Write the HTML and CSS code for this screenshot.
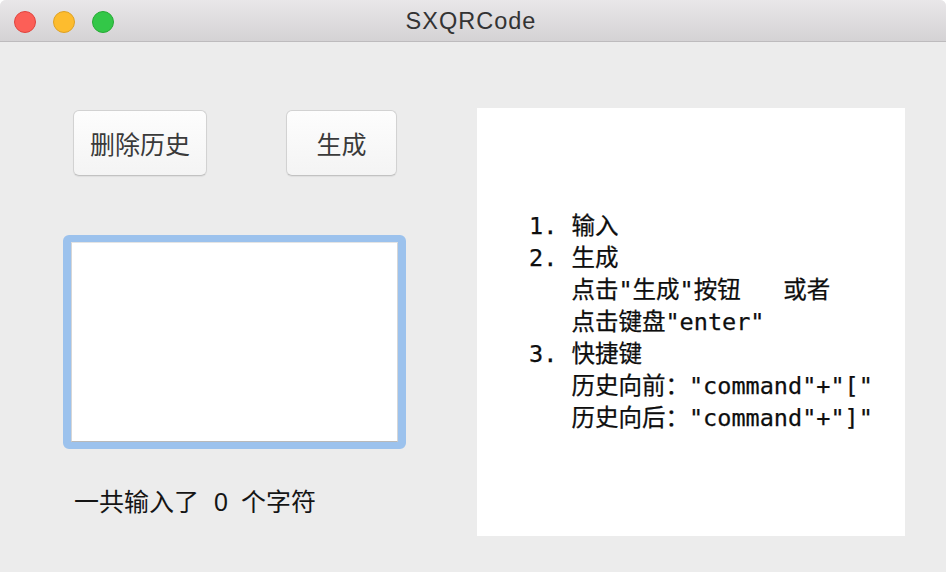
FILE: index.html
```html
<!DOCTYPE html>
<html lang="zh">
<head>
<meta charset="utf-8">
<title>SXQRCode</title>
<link rel="stylesheet" href="styles.css">
</head>
<body>
<div class="window">
  <header class="titlebar">
    <div class="lights">
      <span class="light red"></span>
      <span class="light yellow"></span>
      <span class="light green"></span>
    </div>
    <div class="title">SXQRCode</div>
  </header>
  <main class="content">
    <section class="left">
      <div class="buttons">
        <button class="btn btn-delete">删除历史</button>
        <button class="btn btn-gen">生成</button>
      </div>
      <div class="field"><div class="field-inner"></div></div>
      <div class="count">一共输入了<span class="num">0</span>个字符</div>
    </section>
    <section class="panel">
<pre class="help">1. 输入
2. 生成
   点击"生成"按钮   或者
   点击键盘"enter"
3. 快捷键
   历史向前："command"+"["
   历史向后："command"+"]"</pre>
    </section>
  </main>
</div>
</body>
</html>
```
FILE: styles.css
```css
html, body {
  margin: 0;
  padding: 0;
  background: #ffffff;
}
body {
  width: 946px;
  height: 572px;
  overflow: hidden;
  font-family: "Noto Sans CJK SC", "Liberation Sans", sans-serif;
}
.window {
  width: 946px;
  height: 572px;
  background: #ececec;
  border-radius: 6px 6px 0 0;
  overflow: hidden;
  display: flex;
  flex-direction: column;
}
.titlebar {
  height: 41px;
  border-bottom: 1px solid #bdbbbd;
  background: linear-gradient(#e9e7e9, #d4d2d4);
  display: flex;
  align-items: center;
  position: relative;
  flex-shrink: 0;
}
.lights {
  display: flex;
  gap: 17px;
  padding-left: 14px;
  padding-top: 2px;
}
.light {
  width: 22px;
  height: 22px;
  border-radius: 50%;
  box-sizing: border-box;
}
.red { background: #fc5f57; border: 1px solid #e0443e; }
.yellow { background: #fdbc2e; border: 1px solid #dea123; }
.green { background: #33c748; border: 1px solid #27aa35; }
.title {
  position: absolute;
  left: 0;
  right: 0;
  top: 0;
  bottom: 0;
  display: flex;
  align-items: center;
  justify-content: center;
  font-family: "Liberation Sans", sans-serif;
  font-size: 23.5px;
  letter-spacing: 1px;
  color: #333333;
  padding-top: 1px;
  padding-right: 4px;
}
.content {
  flex: 1;
  display: flex;
  padding: 66px 0 0 63px;
  gap: 71px;
}
.left {
  width: 343px;
  display: flex;
  flex-direction: column;
}
.buttons {
  display: flex;
  gap: 79px;
  padding-left: 10px;
  margin-top: 2px;
}
.btn {
  height: 66px;
  box-sizing: border-box;
  border: 1px solid #d2d2d2;
  border-bottom-color: #c2c2c2;
  border-radius: 6px;
  background: linear-gradient(#fdfdfd, #f4f4f4);
  box-shadow: 0 1px 1px rgba(0,0,0,0.06);
  font-family: "Noto Sans CJK SC", sans-serif;
  font-size: 25px;
  color: #3a3a3a;
  padding: 0;
  line-height: 1;
}
.btn-delete { width: 134px; }
.btn-gen { width: 111px; }
.field {
  margin-top: 59px;
  height: 214px;
  box-sizing: border-box;
  border: 7px solid #9cc2ed;
  border-left-width: 8px;
  border-right-width: 8px;
  border-radius: 6px;
  background: #ffffff;
}
.field-inner {
  height: 100%;
  box-sizing: border-box;
  border: 1px solid #d6d6d6;
  border-top-color: #e4e4e4;
  border-bottom-color: #b9b9b9;
  background: #ffffff;
}
.count {
  margin-top: 34px;
  padding-left: 11px;
  font-size: 25px;
  line-height: 34px;
  color: #151515;
}
.num {
  font-family: "Liberation Sans", sans-serif;
  margin: 0 13px 0 15px;
}
.panel {
  width: 428px;
  height: 428px;
  background: #ffffff;
  display: flex;
  align-items: center;
  padding-left: 52px;
  box-sizing: border-box;
}
.help {
  margin: 0;
  font-family: "DejaVu Sans Mono", "Noto Sans CJK SC", monospace;
  font-size: 23.5px;
  line-height: 32px;
  color: #0e0e0e;
  -webkit-text-stroke: 0.25px #0e0e0e;
  white-space: pre;
}
```
